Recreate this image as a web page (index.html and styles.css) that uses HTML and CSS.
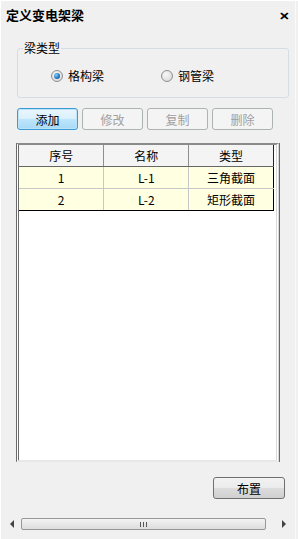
FILE: index.html
```html
<!DOCTYPE html>
<html lang="zh-CN">
<head>
    <meta charset="UTF-8">
    <title>定义变电架梁</title>
    <link rel="stylesheet" href="styles.css">
</head>
<body>
    <div class="window">
        <div class="titlebar">
            <span class="title">定义变电架梁</span>
            <span class="close">✕</span>
        </div>

        <fieldset class="group">
            <legend>梁类型</legend>
            <div class="radio-row">
                <label class="radio first"><span class="dot checked"></span>格构梁</label>
                <label class="radio"><span class="dot"></span>钢管梁</label>
            </div>
        </fieldset>

        <div class="actions">
            <button class="btn focus">添加</button>
            <button class="btn" disabled>修改</button>
            <button class="btn" disabled>复制</button>
            <button class="btn" disabled>删除</button>
        </div>

        <div class="grid-box">
            <table class="grid">
                <thead>
                    <tr><th>序号</th><th>名称</th><th>类型</th></tr>
                </thead>
                <tbody>
                    <tr><td>1</td><td>L-1</td><td>三角截面</td></tr>
                    <tr><td>2</td><td>L-2</td><td>矩形截面</td></tr>
                </tbody>
            </table>
        </div>

        <div class="footer">
            <button class="btn place">布置</button>
        </div>

        <div class="hscroll">
            <span class="arrow left"></span>
            <div class="thumb"><span class="grip"></span></div>
            <span class="arrow right"></span>
        </div>
    </div>
</body>
</html>
```

FILE: styles.css
```css
html, body {
    margin: 0;
    padding: 0;
    background: #f0f0f0;
}
body {
    font-family: "Noto Sans CJK SC", "Liberation Sans", sans-serif;
    font-size: 12px;
    color: #000;
}
.window {
    width: 298px;
    height: 539px;
    box-sizing: border-box;
    border-top: 1px solid #fff;
    border-left: 1px solid #fff;
    display: flex;
    flex-direction: column;
    overflow: hidden;
    position: relative;
}
.window::after {
    content: "";
    position: absolute;
    top: 0;
    bottom: 0;
    left: 294px;
    width: 1px;
    background: #fafafa;
}
.titlebar {
    height: 27px;
    display: flex;
    align-items: center;
    justify-content: space-between;
    padding: 0 9px 0 5px;
    box-sizing: border-box;
}
.title {
    font-size: 13px;
    font-weight: bold;
    line-height: 26px;
}
.close {
    font-size: 12px;
    font-weight: bold;
    line-height: 26px;
    transform: scale(1.1, 0.95);
}
.group {
    margin: 13px 9px 0 16px;
    padding: 0 0 11px 0;
    border: 1px solid #d5dce3;
    border-radius: 3px;
    min-width: 0;
}
.group legend {
    margin-left: 5px;
    padding: 0 1px;
    line-height: 14px;
    font-size: 12px;
}
.radio-row {
    margin-top: 11px;
    height: 20px;
    display: flex;
    align-items: center;
}
.radio {
    display: flex;
    align-items: center;
    gap: 5px;
    line-height: 20px;
}
.radio.first {
    margin-left: 33px;
    width: 110px;
}
.dot {
    width: 12px;
    height: 12px;
    box-sizing: border-box;
    border-radius: 50%;
    border: 1px solid #8e8f8f;
    background: radial-gradient(circle at 40% 35%, #f7f7f7 0%, #d4d4d4 100%);
    position: relative;
}
.dot.checked::after {
    content: "";
    position: absolute;
    left: 2px;
    top: 2px;
    width: 6px;
    height: 6px;
    border-radius: 50%;
    background: radial-gradient(circle at 35% 35%, #8fd1f7 0%, #1a72b8 60%, #0d4f8a 100%);
}
.actions {
    margin: 10px 0 0 16px;
    display: flex;
    gap: 4px;
}
.btn {
    font-family: inherit;
    font-size: 12px;
    width: 61px;
    height: 22px;
    padding: 0;
    border: 1px solid #707070;
    border-radius: 3px;
    background: linear-gradient(#f2f2f2 0%, #ebebeb 50%, #dddddd 51%, #cfcfcf 100%);
    color: #000;
}
.btn.focus {
    border-color: #3c9ad7;
    background: linear-gradient(#eaf6fd 0%, #d9f0fc 50%, #bee6fd 51%, #a7d9f5 100%);
    box-shadow: inset 0 0 0 1px #bde3f7;
}
.btn:disabled {
    border-color: #adb2b5;
    background: #f4f4f4;
    color: #a0a0a0;
}
.grid-box {
    margin: 13px 0 0 15px;
    width: 263px;
    height: 319px;
    box-sizing: border-box;
    background: #fff;
    border-left: 3px double #6a6a6a;
    border-top: 2px solid #8a8a8a;
    border-right: 3px double #d8d8d8;
    border-bottom: 2px solid #e8e8e8;
    box-shadow: 1px 0 0 #6a6a6a;
}
.grid {
    width: 255px;
    border-collapse: collapse;
    table-layout: fixed;
}
.grid th, .grid td {
    text-align: center;
    padding: 0;
    font-weight: normal;
}
.grid th {
    height: 21px;
    background: #f4f4f4;
    border-right: 1px solid #8f8f8f;
    border-bottom: 1px solid #666;
}
.grid td {
    height: 21px;
    background: #ffffe1;
    border-right: 1px solid #c8c8c8;
    border-bottom: 1px solid #c8c8c8;
}
.grid th:last-child {
    border-right: 1px solid #222;
}
.grid td:last-child {
    border-right: 1px solid #000;
}
.grid tbody tr:last-child td {
    border-bottom: 1px solid #000;
}
.footer {
    margin-top: 15px;
    display: flex;
    justify-content: flex-end;
    padding-right: 13px;
}
.btn.place {
    width: 72px;
}
.hscroll {
    margin: 19px 0 0 4px;
    width: 290px;
    height: 12px;
    display: flex;
    align-items: center;
}
.arrow {
    width: 0;
    height: 0;
    border-top: 4px solid transparent;
    border-bottom: 4px solid transparent;
}
.arrow.left {
    margin: 0 7px 0 5px;
    border-right: 4px solid #444;
}
.arrow.right {
    margin: 0 5px 0 16px;
    border-left: 4px solid #444;
}
.thumb {
    width: 245px;
    height: 12px;
    box-sizing: border-box;
    border: 1px solid #979797;
    border-radius: 2px;
    background: linear-gradient(#f3f3f3, #dcdcdc);
    display: flex;
    justify-content: center;
    align-items: center;
}
.grip {
    width: 5px;
    height: 5px;
    border-left: 1px solid #555;
    border-right: 1px solid #555;
    position: relative;
}
.grip::after {
    content: "";
    position: absolute;
    left: 2px;
    top: 0;
    width: 1px;
    height: 5px;
    background: #555;
}
```
